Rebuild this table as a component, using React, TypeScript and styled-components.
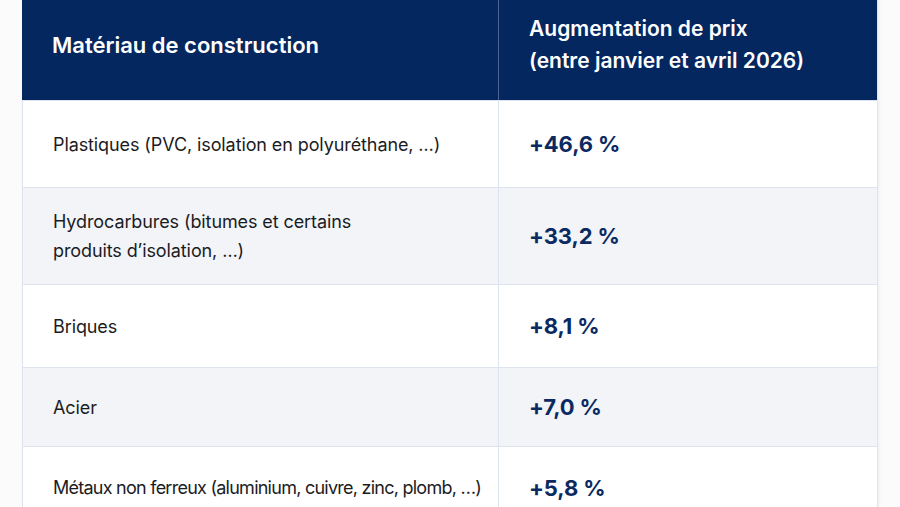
import { Fragment } from "react";
import styled, { createGlobalStyle } from "styled-components";

const GlobalStyle = createGlobalStyle`
  html, body {
    margin: 0;
    padding: 0;
    background: #fbfbfc;
  }
  body {
    font-family: Inter, "Noto Sans", "Liberation Sans", sans-serif;
    overflow: hidden;
  }
`;

const Page = styled.div`
  width: 900px;
  height: 507px;
  overflow: hidden;
  padding-left: 22px;
  box-sizing: border-box;
`;

const Table = styled.div`
  width: 855px;
  display: grid;
  grid-template-columns: 476px 379px;
  background: #ffffff;
  border-right: 1px solid #dfe4ee;
  box-shadow: 1px 0 3px rgba(30, 40, 70, 0.06);
`;

const HeadCell = styled.div<{ $divider?: boolean; $size: number }>`
  height: 100px;
  box-sizing: border-box;
  background: #04275f;
  color: #ffffff;
  font-size: ${({ $size }) => $size}px;
  font-weight: 600;
  line-height: 32px;
  padding: 0 10px 10px 30px;
  display: flex;
  align-items: center;
  border-left: ${({ $divider }) => ($divider ? "1px solid #4a6394" : "none")};
`;

const Cell = styled.div<{ $striped: boolean; $height: number }>`
  height: ${({ $height }) => $height}px;
  box-sizing: border-box;
  background: ${({ $striped }) => ($striped ? "#f2f4f8" : "#ffffff")};
  border-top: 1px solid #dde3ef;
  border-left: 1px solid #dde3ef;
  padding: 0 8px 0 30px;
  display: flex;
  align-items: center;
`;

const Material = styled.span<{ $tracking: number }>`
  color: #1c1c1f;
  font-size: 18px;
  line-height: 29px;
  font-weight: 400;
  letter-spacing: ${({ $tracking }) => $tracking}px;
  white-space: nowrap;
`;

const Increase = styled.span`
  color: #0b2a62;
  font-size: 22px;
  font-weight: 700;
  letter-spacing: -0.1px;
`;

const rows = [
  { material: "Plastiques (PVC, isolation en polyuréthane, …)", value: "+46,6 %", height: 87, tracking: -0.1 },
  {
    material: (
      <>
        Hydrocarbures (bitumes et certains
        <br />
        produits d’isolation, …)
      </>
    ),
    value: "+33,2 %",
    height: 97,
    tracking: -0.1,
  },
  { material: "Briques", value: "+8,1 %", height: 83, tracking: -0.1 },
  { material: "Acier", value: "+7,0 %", height: 79, tracking: -0.1 },
  {
    material: "Métaux non ferreux (aluminium, cuivre, zinc, plomb, …)",
    value: "+5,8 %",
    height: 82,
    tracking: -0.75,
  },
];

export default function App() {
  return (
    <>
      <GlobalStyle />
      <Page>
        <Table>
          <HeadCell $size={22}>Matériau de construction</HeadCell>
          <HeadCell $divider $size={21}>
            <span>
              Augmentation de prix
              <br />
              (entre janvier et avril 2026)
            </span>
          </HeadCell>
          {rows.map((row, i) => (
            <Fragment key={i}>
              <Cell $striped={i % 2 === 1} $height={row.height}>
                <Material $tracking={row.tracking}>{row.material}</Material>
              </Cell>
              <Cell $striped={i % 2 === 1} $height={row.height}>
                <Increase>{row.value}</Increase>
              </Cell>
            </Fragment>
          ))}
        </Table>
      </Page>
    </>
  );
}
